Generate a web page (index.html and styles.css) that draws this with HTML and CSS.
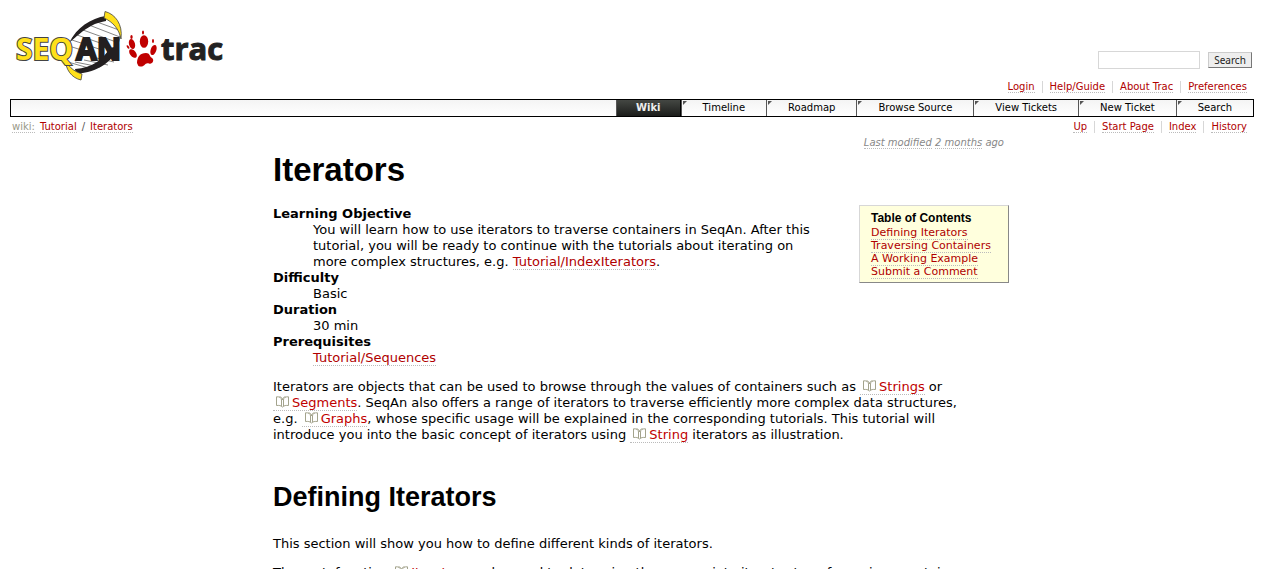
FILE: index.html
```html
<!DOCTYPE html>
<html lang="en">
<head>
<meta charset="utf-8">
<title>Tutorial/Iterators – SeqAn</title>
<link rel="stylesheet" href="styles.css">
</head>
<body>
<svg width="0" height="0" class="sprite" aria-hidden="true">
  <symbol id="book" viewBox="0 0 13 12">
    <path d="M5.500 10.500V4C5.500 2 4 .5 .5 .8V9.500C3 9.200 5 9.500 6.500 11C8 9.500 10 9.200 12.500 9.500V.8C9 .5 7.500 2 7.500 4v6.500M3.500 .8C5 .8 6.500 2 6.500 4C6.500 2 8 .8 9.500 .8" fill="none" stroke="#a3a38c"/>
  </symbol>
</svg>

<header class="banner">
  <a class="logo" href="#" aria-label="SeqAn trac">
    <svg width="220" height="80" viewBox="10 5 220 80">
      <path d="M120 37C122 26 116 16 105 18C87 22 71 34 67 49C64 60 67 69 76 72C93 71 115 60 120 37z" fill="#fff" stroke="#333" stroke-width=".7"/>
      <path d="M89 25l31 12M83 30l36 13M77 35l32 11M72 40l30 10M69 46l22 7M92 57l22 5M84 60l24 5M75 62l25 5M68 62l24 7M97 22l22 8" stroke="#333" stroke-width=".6" fill="none"/>
      <path d="M106 16C91 18 76 28 70 42C76 37 83 30 91 26C96 23 102 22 106 21zM75 69C93 68 103 59 110 48L119 46C113 61 99 72 76 74z" fill="#231f20"/>
      <path d="M105 11.500C115 14 123 24 121 39C119 29 113 22 104 18z" fill="#ffe01b" stroke="#444" stroke-width=".8"/>
      <path d="M65 57C67 66 73 71 82 74L81 80C72 78 65 70 65 57z" fill="#ffe01b" stroke="#444" stroke-width=".8"/>
      <text class="logo-seq" x="16" y="60">SEQ</text>
      <text class="logo-an" x="76" y="60">AN</text>
      <g fill="#c00000">
        <ellipse cx="132" cy="44" rx="3" ry="5.200" transform="rotate(-15 132 44)"/>
        <ellipse cx="144" cy="41.500" rx="4.200" ry="6.300"/>
        <ellipse cx="153.500" cy="50" rx="2.800" ry="5.200" transform="rotate(20 153.500 50)"/>
        <ellipse cx="133" cy="53.500" rx="3" ry="5" transform="rotate(-38 133 53.500)"/>
        <path d="M137 63C137 57 140 53 146 53C150 53 149 56 152 58C155 60 152 65 149 63.500C145 62 145 66.500 141 66.500C138 67 138 65 137 63z"/>
        <ellipse cx="131.500" cy="37" rx="1.200" ry="2"/>
        <ellipse cx="143" cy="32.500" rx="1" ry="2"/>
        <ellipse cx="153" cy="41" rx="1" ry="2"/>
        <ellipse cx="128" cy="47" rx="1" ry="2" transform="rotate(-35 128 47)"/>
      </g>
      <text class="logo-trac" x="161" y="60">trac</text>
    </svg>
  </a>
  <div class="tools">
    <form class="search">
      <input type="text" aria-label="Search">
      <button type="button">Search</button>
    </form>
    <ul class="links">
      <li><a href="#">Login</a></li>
      <li><a href="#">Help/Guide</a></li>
      <li><a href="#">About Trac</a></li>
      <li><a href="#">Preferences</a></li>
    </ul>
  </div>
</header>

<nav class="mainnav">
  <a class="active" href="#">Wiki</a>
  <a href="#">Timeline</a>
  <a href="#">Roadmap</a>
  <a href="#">Browse Source</a>
  <a href="#">View Tickets</a>
  <a href="#">New Ticket</a>
  <a href="#">Search</a>
</nav>

<div class="context">
  <div class="path"><a class="first" href="#">wiki:</a> <a href="#">Tutorial</a> <span>/</span> <a href="#">Iterators</a></div>
  <ul class="links">
    <li><a href="#">Up</a></li>
    <li><a href="#">Start Page</a></li>
    <li><a href="#">Index</a></li>
    <li><a href="#">History</a></li>
  </ul>
</div>

<main class="wiki">
  <p class="modified"><a href="#">Last modified</a> <a href="#">2 months</a> ago</p>
  <h1>Iterators</h1>
  <aside class="toc">
    <h4>Table of Contents</h4>
    <ol>
      <li><a href="#">Defining Iterators</a></li>
      <li><a href="#">Traversing Containers</a></li>
      <li><a href="#">A Working Example</a></li>
      <li><a href="#">Submit a Comment</a></li>
    </ol>
  </aside>
  <dl>
    <dt>Learning Objective</dt>
    <dd>You will learn how to use iterators to traverse containers in SeqAn. After this<br>tutorial, you will be ready to continue with the tutorials about iterating on<br>more complex structures, e.g. <a href="#">Tutorial/IndexIterators</a>.</dd>
    <dt>Difficulty</dt>
    <dd>Basic</dd>
    <dt>Duration</dt>
    <dd>30 min</dd>
    <dt>Prerequisites</dt>
    <dd><a href="#">Tutorial/Sequences</a></dd>
  </dl>
  <p>Iterators are objects that can be used to browse through the values of containers such as <a class="doc" href="#"><svg><use href="#book"/></svg>Strings</a> or<br><a class="doc" href="#"><svg><use href="#book"/></svg>Segments</a>. SeqAn also offers a range of iterators to traverse efficiently more complex data structures,<br>e.g. <a class="doc" href="#"><svg><use href="#book"/></svg>Graphs</a>, whose specific usage will be explained in the corresponding tutorials. This tutorial will<br>introduce you into the basic concept of iterators using <a class="doc" href="#"><svg><use href="#book"/></svg>String</a> iterators as illustration.</p>
  <h2>Defining Iterators</h2>
  <p>This section will show you how to define different kinds of iterators.</p>
  <p>The metafunction <a class="doc" href="#"><svg><use href="#book"/></svg>Iterator</a> can be used to determine the appropriate iterator type for a given container.</p>
</main>
</body>
</html>
```

FILE: styles.css
```css
html { height: 100%; overflow: hidden; }
body {
  margin: 0 10px;
  height: 100%;
  overflow: hidden;
  background: #fff;
  color: #000;
  font: 13px/16px Verdana, "DejaVu Sans", sans-serif;
}
a { color: #b00000; text-decoration: none; border-bottom: 1px dotted #bbb; }
ul, ol { list-style: none; margin: 0; padding: 0; }
.sprite { position: absolute; }

.banner { display: flex; justify-content: space-between; padding-top: 5px; }
.logo { border: 0; height: 94px; }
.logo text { font-family: "Open Sans", sans-serif; font-weight: 700; paint-order: stroke; }
.logo-seq { font-size: 30px; fill: #ffe01b; stroke: #444; stroke-width: 2px; }
.logo-an { font-size: 30px; fill: #231f20; stroke: #231f20; stroke-width: 2px; }
.logo-trac { font-size: 31px; fill: #222; stroke: #222; stroke-width: 1px; }

.tools { display: flex; flex-direction: column; align-items: flex-end; padding-top: 46px; }
.search { display: flex; align-items: center; gap: 8px; margin: 0 2px 12px 0; }
.search input {
  box-sizing: border-box;
  width: 102px;
  height: 18px;
  border: 1px solid #d7d7d7;
  padding: 0 3px;
  background: #fff;
}
.search button {
  box-sizing: border-box;
  width: 44px;
  height: 16px;
  padding: 0;
  border: 1px solid;
  border-color: #ccc #777 #777 #ccc;
  background: #eee;
  color: #222;
  font: 10px/14px "Noto Sans", sans-serif;
}

.links { display: flex; font-size: 10px; line-height: 12px; }
.links li { padding: 0 7px; border-right: 1px solid #d7d7d7; }
.links li:last-child { border-right: 0; }
.links a, .path a { display: inline-block; line-height: 11px; }

.mainnav {
  display: flex;
  justify-content: flex-end;
  border: 1px solid #000;
  background: linear-gradient(#f4f4f4, #fff);
  font-size: 10px;
  line-height: 16px;
}
.mainnav a {
  position: relative;
  padding: 0 21px;
  border: 0;
  border-left: 1px solid #555;
  color: #000;
}
.mainnav a::before {
  content: "";
  position: absolute;
  top: 1px;
  left: 1px;
  border-top: 4px solid #555;
  border-right: 4px solid transparent;
}
.mainnav .active {
  padding: 0 19px;
  background: linear-gradient(#444743, #1c1d1b);
  color: #eee;
  font-weight: bold;
  border-right: 1px solid #000;
}
.mainnav .active::before { display: none; }

.context { display: flex; justify-content: space-between; padding-top: 4px; font-size: 10px; line-height: 12px; }
.path { display: flex; gap: 5px; padding-left: 2px; color: #555; }
.path .first { color: #998; }

.wiki { max-width: 736px; margin: 0 auto; padding-left: 18px; }
.modified { margin: 4px 5px 0 0; text-align: right; color: #888; font-size: 10px; line-height: 12px; font-style: italic; }
.modified a { color: #888; }
h1, h2, h4 { font-family: Arial, "Liberation Sans", sans-serif; font-weight: bold; }
h1 { margin: 1px 0 16px; font-size: 33px; line-height: 40px; }
h2 { margin: 36px 0 21px; font-size: 27px; line-height: 36px; }
dl { margin: 0 0 13px; }
dt { font-weight: bold; }
dd { margin: 0 0 0 40px; }
p { margin: 0 0 13px; }
.toc {
  float: right;
  box-sizing: border-box;
  width: 150px;
  margin: -1px 0 20px 20px;
  padding: 5px 11px 4px;
  border: 1px solid;
  border-color: #d7d7d7 #888 #888 #d7d7d7;
  background: #ffd;
  font-size: 11px;
  line-height: 13px;
}
.toc h4 { margin: 0; font-size: 12px; line-height: 15px; }
.toc li { white-space: nowrap; }
.doc { white-space: nowrap; padding-left: 3px; color: #c00000; }
.doc svg { width: 13px; height: 12px; margin-right: 3px; vertical-align: -1px; }
```
